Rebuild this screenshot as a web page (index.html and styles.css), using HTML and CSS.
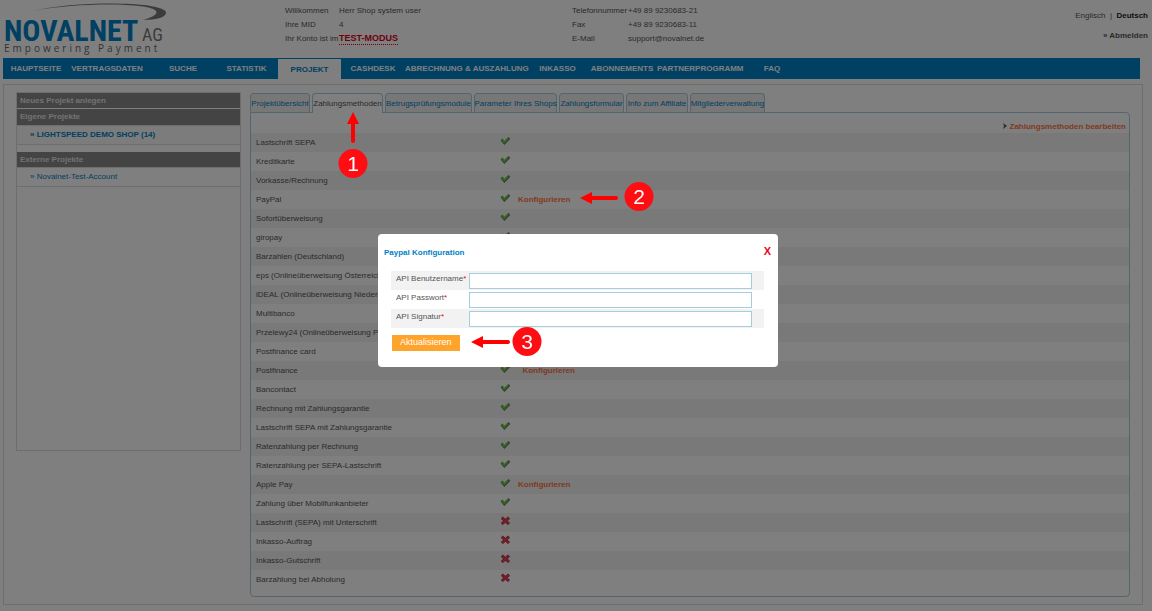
FILE: index.html
```html
<!DOCTYPE html>
<html lang="de">
<head>
<meta charset="utf-8">
<title>Novalnet AG</title>
<link rel="stylesheet" href="styles.css">
<script src="app.js" defer></script>
</head>
<body>
<svg class="sprite" aria-hidden="true">
  <symbol id="yes" viewBox="0 0 10 10"><path d="M1.6 3.6 L4.4 7 L9.400 2" fill="none" stroke="#5c7c56" stroke-width="2.600"/><path d="M1.600 3 L4.200 6.400 L8.200 2.400" fill="none" stroke="#6cc644" stroke-width="1.900"/></symbol>
  <symbol id="no" viewBox="0 0 10 10"><path d="M1.8 1.600 L9 8 M9 1.600 L1.8 8" stroke="#a02838" stroke-width="3"/><path d="M2 1.600 L8.8 7.800 M8.8 1.600 L2 7.800" stroke="#f04058" stroke-width="1.600"/></symbol>
</svg>
<header class="top">
  <a class="logo" href="#" aria-label="Novalnet AG">
    <svg viewBox="0 0 168 56" width="168" height="56" role="img">
      <path d="M32 11 C75 1 160 1 166 12 C167 17 157 20 143 20 C153 17 158 14 156 11 C150 3 82 2 32 11Z" fill="#777"/>
      <text class="logo-name" x="4" y="41">NOVALNET</text>
      <text class="logo-ag" x="142" y="41">AG</text>
      <text class="logo-tag" x="4" y="52">Empowering Payment</text>
    </svg>
  </a>
  <dl class="info account">
    <dt>Willkommen</dt><dd>Herr Shop system user</dd>
    <dt>Ihre MID</dt><dd>4</dd>
    <dt>Ihr Konto ist im</dt><dd><strong class="mode">TEST-MODUS</strong></dd>
  </dl>
  <dl class="info contact">
    <dt>Telefonnummer</dt><dd>+49 89 9230683-21</dd>
    <dt>Fax</dt><dd>+49 89 9230683-11</dd>
    <dt>E-Mail</dt><dd>support@novalnet.de</dd>
  </dl>
  <div class="user">
    <div><a href="#">Englisch</a>&nbsp; | &nbsp;<strong>Deutsch</strong></div>
    <a class="logout" href="#">» Abmelden</a>
  </div>
</header>
<nav class="nav">
  <a class="w54" href="#">HAUPTSEITE</a><a class="w88" href="#">VERTRAGSDATEN</a><a class="w64" href="#">SUCHE</a><a class="w63" href="#">STATISTIK</a><a class="w63 current" href="#">PROJEKT</a><a class="w64" href="#">CASHDESK</a><a class="w123" href="#">ABRECHNUNG &amp; AUSZAHLUNG</a><a class="w59" href="#">INKASSO</a><a class="w70" href="#">ABONNEMENTS</a><a class="w80" href="#">PARTNERPROGRAMM</a><a class="w70" href="#">FAQ</a>
</nav>
<main class="main">
  <aside class="side">
    <h2>Neues Projekt anlegen</h2>
    <h2>Eigene Projekte</h2>
    <a class="own" href="#">» LIGHTSPEED DEMO SHOP (14)</a>
    <h2 class="spaced">Externe Projekte</h2>
    <a href="#">» Novalnet-Test-Account</a>
  </aside>
  <section class="content">
    <div class="tabs">
      <a class="w60" href="#">Projektübersicht</a><a class="w71 current" href="#">Zahlungsmethoden</a><a class="w87" href="#">Betrugsprüfungsmodule</a><a class="w83" href="#">Parameter Ihres Shops</a><a class="w65" href="#">Zahlungsformular</a><a class="w62" href="#">Info zum Affiliate</a><a class="w75" href="#">Mitgliederverwaltung</a>
    </div>
    <div class="panel">
      <div class="edit"><svg width="4" height="6" viewBox="0 0 4 6"><path d="M0 0L4 3L0 6L1 3Z" fill="#555"/></svg><a href="#">Zahlungsmethoden bearbeiten</a></div>
      <table class="methods"><tbody id="methods"></tbody></table>
    </div>
  </section>
</main>
<div class="overlay">
  <div class="modal" role="dialog" aria-labelledby="dialog-title">
    <div class="modal-head"><h1 id="dialog-title">Paypal Konfiguration</h1><button class="close" type="button" aria-label="Schließen">X</button></div>
    <form class="form">
      <div class="field"><label for="user">API Benutzername<i>*</i></label><input id="user" type="text"></div>
      <div class="field"><label for="pass">API Passwort<i>*</i></label><input id="pass" type="text"></div>
      <div class="field"><label for="sig">API Signatur<i>*</i></label><input id="sig" type="text"></div>
      <button class="submit" type="button">Aktualisieren</button>
    </form>
  </div>
</div>
<svg class="notes" width="1152" height="611" viewBox="0 0 1152 611">
  <g fill="red" stroke="none">
    <path d="M353 112L359 124H347Z"/><path d="M580 198L592 192V204Z"/><path d="M471 342L483 336V348Z"/>
  </g>
  <path d="M353 122V141M590 198H616M481 342H508" stroke="red" stroke-width="4" stroke-linecap="round"/>
  <g fill="#ff0d12"><circle cx="353" cy="163.500" r="14.500"/><circle cx="639" cy="196.500" r="14.500"/><circle cx="527" cy="341.500" r="14.500"/></g>
  <g class="note-number"><text x="353" y="171">1</text><text x="639" y="204">2</text><text x="527" y="349">3</text></g>
</svg>
</body>
</html>
```
FILE: styles.css
```css
* { box-sizing: border-box; }
body { margin: 0; background: #fff; color: #555; font: 8px/14px "Liberation Sans", Arial, sans-serif; }
a { color: inherit; text-decoration: none; }
h1, h2, dl, dd { margin: 0; font-size: 8px; }
.sprite { position: absolute; width: 0; height: 0; }
.top { display: flex; height: 58px; padding: 0 4px 0 0; }
.logo { width: 285px; }
.logo svg { display: block; }
.logo-name { font: bold 30px "Roboto Condensed", "Open Sans Condensed", Roboto, sans-serif; fill: #0080c4; }
.logo-ag { font: 18px "Roboto Condensed", "Open Sans Condensed", Roboto, sans-serif; fill: #777; }
.logo-tag { font: 10px "Open Sans", sans-serif; letter-spacing: 3px; fill: #666; }
.info { display: grid; grid-auto-rows: 14px; padding-top: 4px; align-content: start; }
.account { grid-template-columns: 54px 233px; }
.contact { grid-template-columns: 56px 1fr; }
.info dt, .info dd { white-space: nowrap; }
.mode { display: inline-block; font-size: 9px; line-height: 11px; color: #e2001a; border-bottom: 1px dotted #e2001a; }
.user { margin-left: auto; padding-top: 9px; text-align: right; display: flex; flex-direction: column; gap: 6px; }
.user strong { color: #222; }
.logout { font-weight: bold; }
.nav { display: flex; height: 21px; margin: 0 12px 0 3px; padding: 1px 0 0 6px; background: #0080c4; color: #fff; font-weight: bold; line-height: 20px; }
.nav a { text-align: center; white-space: nowrap; }
.nav .current { background: #fff; color: #0080c4; line-height: 21px; }
.w54 { width: 54px; }
.w59 { width: 59px; }
.w60 { width: 60px; }
.w62 { width: 62px; }
.w63 { width: 63px; }
.w64 { width: 64px; }
.w65 { width: 65px; }
.w70 { width: 70px; }
.w71 { width: 71px; }
.w75 { width: 75px; }
.w80 { width: 80px; }
.w83 { width: 83px; }
.w87 { width: 87px; }
.w88 { width: 88px; }
.w123 { width: 123px; }
.main { display: flex; align-items: flex-start; gap: 9px; margin: 5px 9px 0 3px; padding: 7px 12px 7px; border: 1px solid #ddd; }
.side { width: 225px; min-height: 359px; border: 1px solid #ddd; }
.side h2 { padding: 0 3px; line-height: 15px; background: #888; color: #e4e4e4; }
.side h2 + h2 { margin-top: 1px; line-height: 16px; }
.side a { display: block; padding-left: 13px; line-height: 18px; color: #0080c4; border: solid #ddd; border-width: 1px 0; }
.side .own { font-weight: bold; background: #f8f8f8; }
.side .spaced { margin-top: 7px; }
.content { flex: 1; min-width: 0; padding-top: 1px; }
.tabs { display: flex; gap: 2px; }
.tabs a { display: flex; justify-content: center; height: 19px; line-height: 20px; white-space: nowrap; border: 1px solid #a6cddb; border-bottom: 0; border-radius: 4px 4px 0 0; background: #efefef; color: #0080c4; }
.tabs .current { height: 20px; margin-bottom: -1px; position: relative; background: #fff; color: #555; }
.panel { border: 1px solid #a6cddb; border-radius: 0 4px 4px 4px; padding-bottom: 7px; }
.edit { display: flex; justify-content: flex-end; align-items: center; gap: 3px; height: 20px; padding: 7px 3px 0 0; color: #ff7440; font-weight: bold; }
.edit svg { margin-bottom: 2px; }
.methods { width: 100%; border-collapse: collapse; }
.methods td { height: 19px; padding: 0; white-space: nowrap; }
.methods tr:nth-child(odd) { background: #f2f2f2; }
.methods .name { width: 249px; padding-left: 5px; }
.methods .state { width: 18px; }
.methods svg { display: block; margin-bottom: 3px; }
.methods .action { color: #ff7440; font-weight: bold; }
.overlay { position: fixed; inset: 0; display: flex; justify-content: center; align-items: flex-start; padding: 234px 0 0 4px; background: rgba(0, 0, 0, .5); }
.modal { width: 400px; padding: 10px 6px 16px; background: #fff; border-radius: 4px; }
.modal-head { display: flex; justify-content: space-between; align-items: flex-start; height: 17px; color: #0080c4; line-height: 17px; }
.close { padding: 0 1px 0 0; border: 0; background: none; color: #f0001c; font: bold 11px/14px "Liberation Sans", Arial, sans-serif; }
.form { margin: 10px 8px 0 7px; }
.field { display: flex; height: 19px; padding: 2px 12px 1px 5px; }
.field:nth-child(odd) { background: #f2f2f2; }
.field label { width: 73px; line-height: 12px; }
.field i { color: #f0001c; font-style: normal; }
.field input { flex: 1; min-width: 0; padding: 0 3px; border: 1px solid #a6cddb; background: #fff; font: inherit; }
.submit { display: block; margin: 7px 0 0 1px; padding: 0 8px 1px; border: 0; background: #ffa42b; color: #fff; font: 9px/15px "Liberation Sans", Arial, sans-serif; }
.notes { position: absolute; top: 0; left: 0; pointer-events: none; }
.note-number { font: 21px "Liberation Sans", Arial, sans-serif; fill: #fff; text-anchor: middle; }
```
FILE: app.js
```js
const configurable = ["PayPal", "Postfinance", "Apple Pay"];
const active = ["Lastschrift SEPA", "Kreditkarte", "Vorkasse/Rechnung", "PayPal", "Sofortüberweisung", "giropay", "Barzahlen (Deutschland)", "eps (Onlineüberweisung Österreich)", "iDEAL (Onlineüberweisung Niederlande)", "Multibanco", "Przelewy24 (Onlineüberweisung Polen)", "Postfinance card", "Postfinance", "Bancontact", "Rechnung mit Zahlungsgarantie", "Lastschrift SEPA mit Zahlungsgarantie", "Ratenzahlung per Rechnung", "Ratenzahlung per SEPA-Lastschrift", "Apple Pay", "Zahlung über Mobilfunkanbieter"];
const inactive = ["Lastschrift (SEPA) mit Unterschrift", "Inkasso-Auftrag", "Inkasso-Gutschrift", "Barzahlung bei Abholung"];
const link = name => configurable.includes(name) ? `${name === "Postfinance" ? "&nbsp;&nbsp;" : ""}<a href="#">Konfigurieren</a>` : "";
const row = (name, icon) => `<tr><td class="name">${name}</td><td class="state"><svg width="10" height="10"><use href="#${icon}"/></svg></td><td class="action">${link(name)}</td></tr>`;
document.getElementById("methods").innerHTML = active.map(n => row(n, "yes")).join("") + inactive.map(n => row(n, "no")).join("");
```
